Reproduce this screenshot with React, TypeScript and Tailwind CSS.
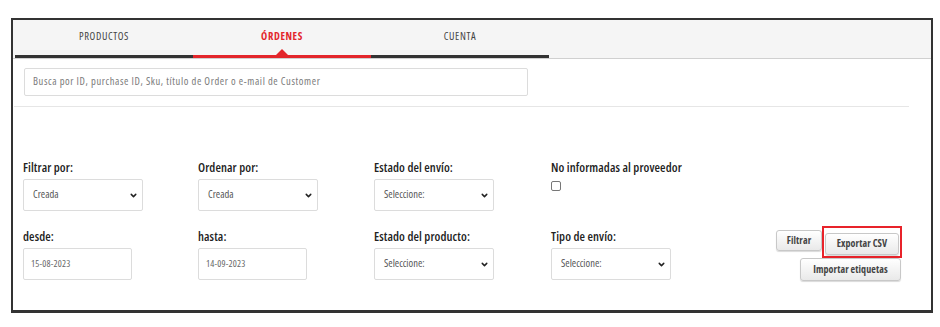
import { ChevronDown } from "lucide-react";

const tabs = ["PRODUCTOS", "ÓRDENES", "CUENTA"];

function Select({ value, width }: { value: string; width: string }) {
  return (
    <div
      className={`${width} h-[32px] border border-[#dcdcdc] rounded-[2px] bg-white flex items-center justify-between pl-[9px] pr-[4px]`}
    >
      <span className="text-[10.5px] text-[#555] font-stretch-condensed">{value}</span>
      <ChevronDown className="size-[9px] text-[#222]" strokeWidth={4} />
    </div>
  );
}

function DateInput({ value }: { value: string }) {
  return (
    <div className="w-[109px] h-[32px] border border-[#dcdcdc] rounded-[2px] bg-white flex items-center pl-[7px]">
      <span className="text-[9.5px] text-[#666] font-stretch-condensed tracking-[0.2px]">{value}</span>
    </div>
  );
}

function Label({ children }: { children: React.ReactNode }) {
  return (
    <div className="text-[12.5px] leading-[16px] font-semibold text-[#222] h-[16px] font-stretch-condensed tracking-[0.1px]">
      {children}
    </div>
  );
}

const btn =
  "text-[10px] font-bold text-[#444] border border-[#c8c8c8] rounded-[3px] bg-gradient-to-b from-white to-[#e9e9e9] shadow-[0_1px_1px_rgba(0,0,0,0.15)] font-stretch-condensed tracking-[0.1px]";

export default function App() {
  return (
    <div className="w-[940px] h-[327px] bg-white pt-[18px] pl-[11px] font-['Open_Sans',sans-serif]">
      <div className="w-[922px] h-[295px] border-2 border-b-[3px] border-[#333]">
        {/* tabs */}
        <div className="h-[39px] bg-[#f5f5f5] border-b border-[#d0d0d0] pl-[2px] flex">
          {tabs.map((tab, i) => (
            <div key={tab} className="w-[178px] flex flex-col">
              <div
                className={`flex-1 flex items-center justify-center text-[10.5px] pb-[1px] font-stretch-condensed tracking-[0.6px] ${
                  i === 1 ? "text-[#e3262b] font-bold" : "text-[#444]"
                }`}
              >
                {tab}
              </div>
              <div className={`relative h-[3px] ${i === 1 ? "bg-[#e3262b]" : "bg-[#333]"}`}>
                {i === 1 && (
                  <div className="absolute left-1/2 -translate-x-1/2 -top-[6px] w-0 h-0 border-l-[6px] border-r-[6px] border-b-[6px] border-l-transparent border-r-transparent border-b-[#e3262b]" />
                )}
              </div>
            </div>
          ))}
        </div>

        {/* search */}
        <div className="mt-[9px] ml-[11px] w-[504px] h-[28px] border border-[#dcdcdc] rounded-[2px] flex items-center pl-[8px]">
          <span className="text-[10.5px] text-[#7a7a7a] font-stretch-condensed tracking-[0.6px]">
            Busca por ID, purchase ID, Sku, título de Order o e-mail de Customer
          </span>
        </div>
        <div className="mt-[10px] ml-[1px] w-[895px] h-[1px] bg-[#e6e6e6]" />

        {/* filters */}
        <div className="mt-[53px] ml-[10px] flex">
          <div className="w-[175px]">
            <Label>Filtrar por:</Label>
            <div className="mt-[3px]">
              <Select value="Creada" width="w-[120px]" />
            </div>
          </div>
          <div className="w-[176px]">
            <Label>Ordenar por:</Label>
            <div className="mt-[3px]">
              <Select value="Creada" width="w-[120px]" />
            </div>
          </div>
          <div className="w-[177px]">
            <Label>Estado del envío:</Label>
            <div className="mt-[3px]">
              <Select value="Seleccione:" width="w-[120px]" />
            </div>
          </div>
          <div>
            <Label>No informadas al proveedor</Label>
            <div className="mt-[5px] w-[10px] h-[10px] border border-[#777] rounded-[2px] bg-white" />
          </div>
        </div>

        <div className="mt-[18px] ml-[10px] flex">
          <div className="w-[175px]">
            <Label>desde:</Label>
            <div className="mt-[3px]">
              <DateInput value="15-08-2023" />
            </div>
          </div>
          <div className="w-[176px]">
            <Label>hasta:</Label>
            <div className="mt-[3px]">
              <DateInput value="14-09-2023" />
            </div>
          </div>
          <div className="w-[177px]">
            <Label>Estado del producto:</Label>
            <div className="mt-[3px]">
              <Select value="Seleccione:" width="w-[120px]" />
            </div>
          </div>
          <div className="w-[120px]">
            <Label>Tipo de envío:</Label>
            <div className="mt-[3px]">
              <Select value="Seleccione:" width="w-[120px]" />
            </div>
          </div>
          <div className="ml-auto mr-[29px] -mt-[3px] flex flex-col items-end">
            <div className="flex">
              <button className={`mt-[4px] h-[21px] w-[46px] ${btn}`}>Filtrar</button>
              <div className="border-2 border-[#e8232a] p-[1px]">
                <button className={`h-[22px] w-[74px] ${btn}`}>Exportar CSV</button>
              </div>
            </div>
            <button className={`mr-[1px] h-[23px] w-[101px] ${btn}`}>Importar etiquetas</button>
          </div>
        </div>
      </div>
    </div>
  );
}
